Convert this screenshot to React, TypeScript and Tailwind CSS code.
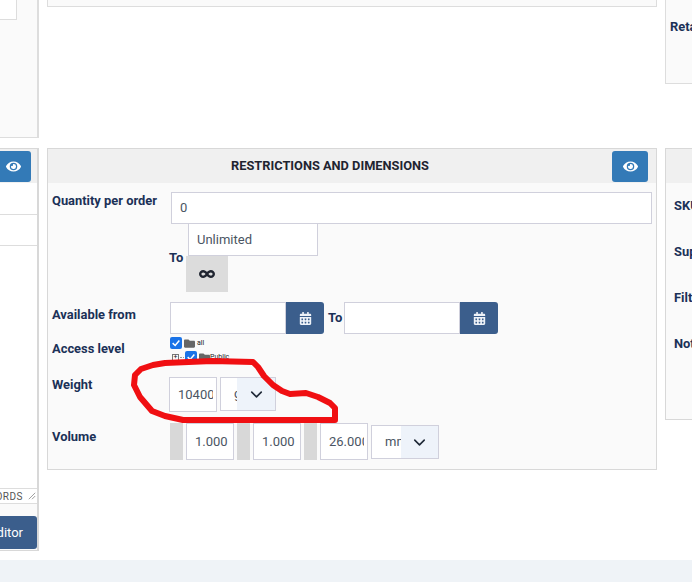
import React from 'react';
import { FaCalendarAlt, FaEye, FaFolder, FaInfinity } from 'react-icons/fa';
import { ChevronDown } from 'lucide-react';

const Label = ({ children, className = '' }: { children: React.ReactNode; className?: string }) => (
  <div className={`w-[118px] shrink-0 text-[12.9px] font-bold leading-[16px] text-[#1b3157] ${className}`}>{children}</div>
);

const EyeButton = ({ className = '' }: { className?: string }) => (
  <div className={`flex h-[31px] items-center justify-center rounded-[3px] bg-[#337ab7] text-white ${className}`}>
    <FaEye size={15} />
  </div>
);

const DateField = () => (
  <div className="flex h-[32px] w-[154px] overflow-hidden rounded-r-[3px]">
    <div className="w-[116px] border border-[#d0d0dc] bg-white" />
    <div className="flex w-[38px] items-center justify-center bg-[#3b5e8c] text-[#eef2f8]">
      <FaCalendarAlt size={13} />
    </div>
  </div>
);

const SmallInput = ({ value, className = '' }: { value: string; className?: string }) => (
  <div className={`flex items-center border border-[#d0d0dc] bg-white pr-[3px] pl-[8px] text-[13px] text-[#4b5563] ${className}`}>
    <span className="overflow-hidden whitespace-nowrap">{value}</span>
  </div>
);

const Select = ({ value, width, arrow }: { value: string; width: string; arrow: string }) => (
  <div className={`flex h-[34px] items-center overflow-hidden border border-[#d0d0dc] bg-white text-[13px] text-[#4b5563] ${width}`}>
    <span className="flex-1 overflow-hidden pl-[13px] whitespace-nowrap">{value}</span>
    <div className={`flex h-full items-center justify-center bg-[#eef3fa] text-[#1f2937] ${arrow}`}>
      <ChevronDown size={19} strokeWidth={2} />
    </div>
  </div>
);

const Addon = () => <div className="h-[37px] w-[13px] shrink-0 bg-[#d8d8d8]" />;

const Check = () => (
  <span className="flex h-[12px] w-[12px] items-center justify-center rounded-[2px] bg-[#1a73e8]">
    <svg viewBox="0 0 12 12" className="h-[10px] w-[10px]" fill="none" stroke="white" strokeWidth="1.8">
      <path d="M2 6.2 5 9l5-6" />
    </svg>
  </span>
);

export default function App() {
  return (
    <div className="relative flex h-[582px] w-[692px] flex-col overflow-hidden bg-white font-['Roboto',sans-serif]">
      <div className="flex h-[560px] gap-[8px]">
        {/* left column, cut by the window */}
        <div className="ml-[-300px] flex w-[339px] shrink-0 flex-col gap-[10px]">
          <div className="h-[138px] border-r-2 border-b border-[#dddddd] bg-[#fafafa]">
            <div className="h-[20px] w-[317px] border-r border-b border-[#dddddd] bg-white" />
          </div>
          <div className="flex h-[403px] flex-col border-r-2 border-b border-t border-[#d8d8d8] bg-[#fafafa]">
            <div className="flex h-[34px] shrink-0 justify-end bg-[#f0f0f0] pt-[2px] pr-[6px]">
              <EyeButton className="w-[36px]" />
            </div>
            <div className="flex h-[321px] flex-col bg-white">
              <div className="h-[32px] border-b border-[#dddddd]" />
              <div className="h-[31px] border-b border-[#dddddd]" />
              <div className="flex-1" />
              <div className="flex h-[16px] items-center justify-end border-y border-[#dddddd] bg-white pr-[1px] text-[10px] tracking-[0.5px] text-[#555555]">
                <span>WORDS</span>
                <svg viewBox="0 0 10 10" className="ml-[5px] h-[8px] w-[8px]" stroke="#888888" fill="none">
                  <path d="M1 9 9 1M5 9l4-4" />
                </svg>
              </div>
            </div>
            <div className="mt-[12px] flex h-[33px] items-center justify-end rounded-[3px] bg-[#3b5e8c] pt-[1px] pr-[14px] text-[13px] text-white">
              Editor
            </div>
          </div>
        </div>

        {/* middle column */}
        <div className="flex w-[610px] shrink-0 flex-col gap-[141px]">
          <div className="h-[7px] border-x border-b border-[#dddddd] bg-[#fafafa]" />
          <div className="h-[322px] border border-[#d8d8d8] bg-[#fafafa]">
            <div className="flex h-[34px] items-center bg-[#f0f0f0] pr-[8px]">
              <div className="flex-1 text-center text-[12.8px] font-bold text-[#1f2430]">RESTRICTIONS AND DIMENSIONS</div>
              <EyeButton className="w-[36px]" />
            </div>
            <div className="px-[4px] pt-[9px]">
              <div className="flex">
                <Label className="pt-[1px]">Quantity per order</Label>
                <div className="ml-[1px] flex h-[32px] w-[481px] items-center border border-[#d0d0dc] bg-white pl-[8px] text-[13px] text-[#4b5563]">0</div>
              </div>
              <div className="flex">
                <Label className="invisible">To</Label>
                <div className="ml-[-1px] flex h-[68px] w-[150px] items-center">
                  <span className="w-[16px] text-[13px] font-bold text-[#1b3157]">To</span>
                  <div className="flex flex-col">
                    <div className="ml-[3px] flex h-[32px] w-[130px] items-center border border-[#d0d0dc] border-t-0 bg-white pl-[8px] text-[13px] text-[#4b5563]">Unlimited</div>
                    <div className="ml-[1px] flex h-[36px] w-[42px] items-center justify-center bg-[#dcdcdc] text-[#1f2430]">
                      <FaInfinity size={16} />
                    </div>
                  </div>
                </div>
              </div>
              <div className="mt-[10px] flex items-center">
                <Label className="pb-[6px]">Available from</Label>
                <DateField />
                <span className="ml-[4px] w-[16px] text-[13px] font-bold text-[#1b3157]">To</span>
                <DateField />
              </div>
              <div className="mt-[3px] flex h-[38px] overflow-hidden">
                <Label className="pt-[4px]">Access level</Label>
                <div className="flex flex-col">
                  <div className="flex h-[12px] items-center gap-[1px] text-[7px] text-[#222222]">
                    <Check />
                    <FaFolder size={11} className="ml-[1px] text-[#666666]" />
                    <span className="ml-[1px]">all</span>
                  </div>
                  <div className="mt-[2px] flex h-[12px] items-center gap-[1px] text-[7px] text-[#222222]">
                    <span className="ml-[2px] flex h-[7px] w-[7px] items-center justify-center border border-[#777777] text-[7px] leading-none">+</span>
                    <span className="w-[4px] border-t border-dotted border-[#999999]" />
                    <Check />
                    <FaFolder size={11} className="ml-[1px] text-[#666666]" />
                    <span className="ml-[-1px]">Public</span>
                  </div>
                </div>
              </div>
              <div className="flex h-[37px]">
                <Label className="pt-[2px]">Weight</Label>
                <div className="ml-[-1px] flex items-start gap-[3px] pt-[2px]">
                  <SmallInput value="10400" className="h-[35px] w-[48px]" />
                  <Select value="g" width="w-[56px]" arrow="w-[38px]" />
                </div>
              </div>
              <div className="mt-[11px] flex">
                <Label className="pt-[6px]">Volume</Label>
                <div className="flex gap-[3px]">
                  <Addon />
                  <SmallInput value="1.000" className="h-[37px] w-[48px]" />
                  <Addon />
                  <SmallInput value="1.000" className="h-[37px] w-[48px]" />
                  <Addon />
                  <SmallInput value="26.000" className="h-[37px] w-[48px]" />
                  <div className="pt-[2px]">
                    <Select value="mm" width="w-[68px]" arrow="w-[37px] shrink-0" />
                  </div>
                </div>
              </div>
            </div>
          </div>
        </div>

        {/* right column, cut by the window */}
        <div className="flex w-[300px] shrink-0 flex-col gap-[64px]">
          <div className="h-[84px] border-x border-b border-[#dddddd] bg-[#fafafa] pt-[19px] pl-[4px]">
            <Label>Retail price</Label>
          </div>
          <div className="h-[272px] border border-[#d8d8d8] bg-[#fafafa]">
            <div className="h-[34px] bg-[#f0f0f0]" />
            <div className="flex flex-col gap-[30px] pt-[15px] pl-[8px]">
              <Label>SKU</Label>
              <Label>Supplier</Label>
              <Label>Filter</Label>
              <Label>Notes</Label>
            </div>
          </div>
        </div>
      </div>
      <div className="flex-1 bg-[#eff3f7]" />

      {/* red marker scribble drawn over the screenshot */}
      <svg className="pointer-events-none absolute top-0 left-0" width="692" height="582" fill="none">
        <path
          d="M253 362 L212 361 L165 363 L153 365 L141 369 L135 375 L134 385 L140 397 L152 411 L165 416 L183 420 L335 420 L335 408 L330 403 L318 397 L306 393 L290 394 L282 391 L273 385 L264 376 L258 367 Z"
          stroke="#f00f12"
          strokeWidth="6"
          strokeLinejoin="round"
        />
      </svg>
    </div>
  );
}
